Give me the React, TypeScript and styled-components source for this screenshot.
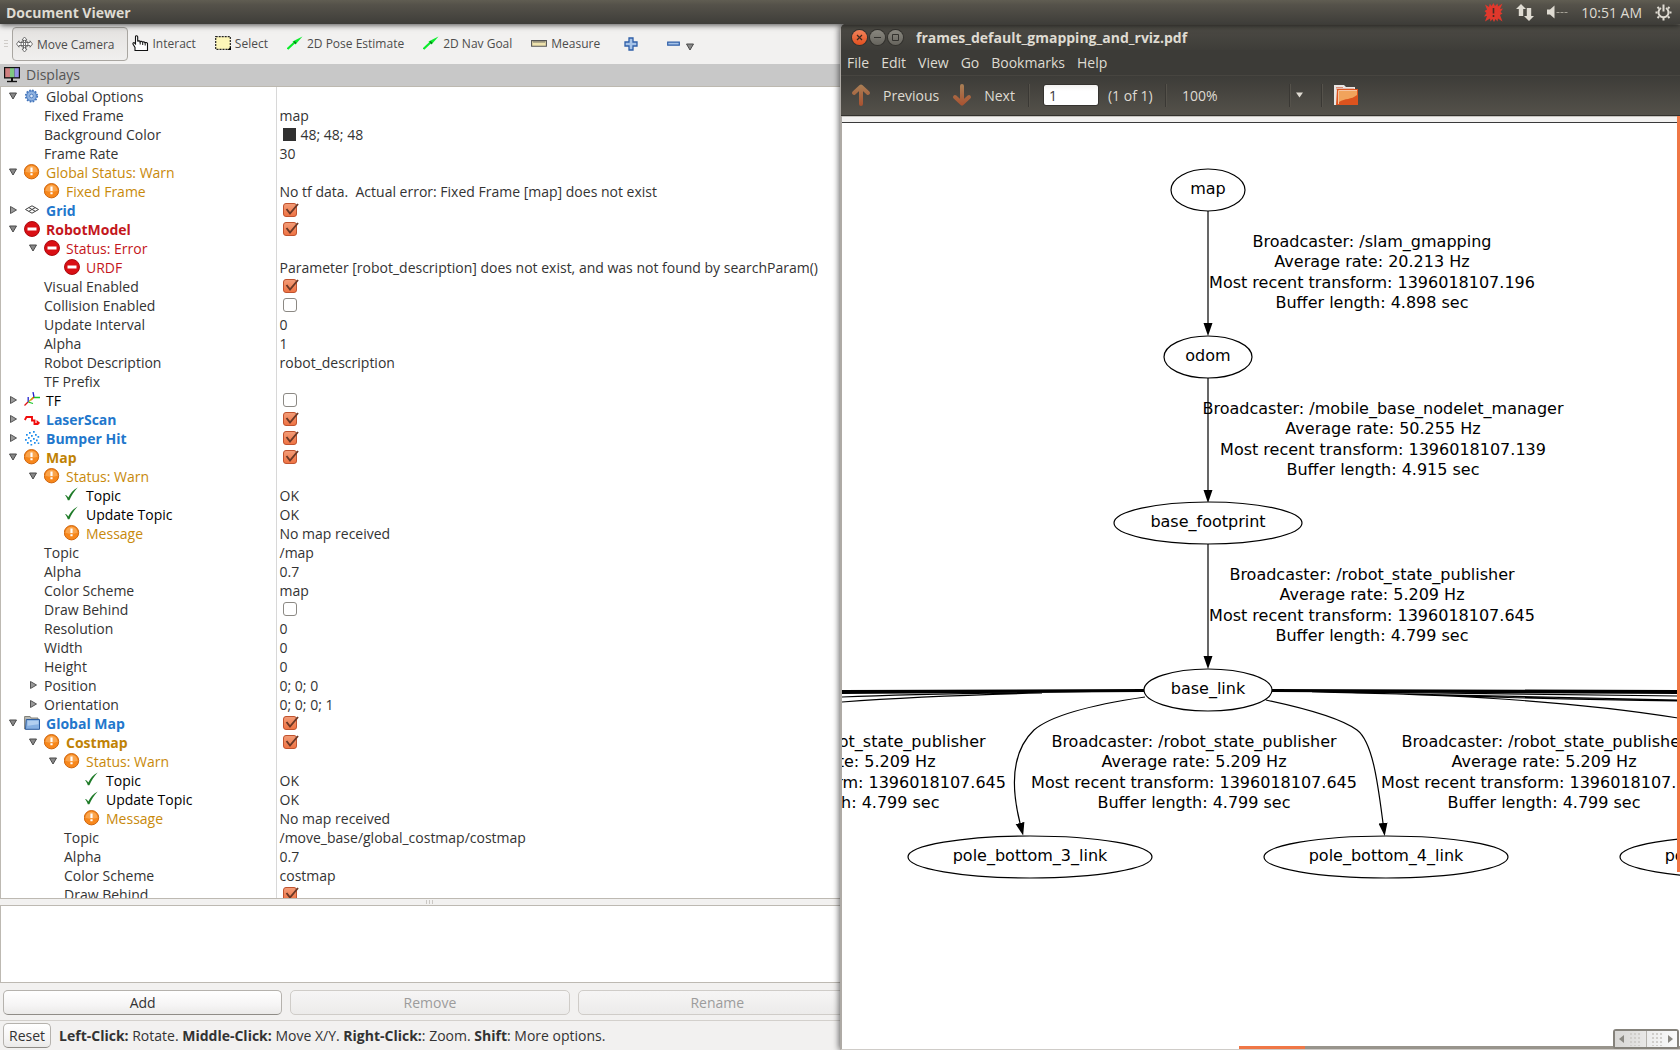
import React from "react";
import styled, { createGlobalStyle, css } from "styled-components";

const UI_FONT = '"Open Sans", "Noto Sans", sans-serif';

const GlobalStyle = createGlobalStyle`
  *, *::before, *::after { box-sizing: border-box; }
  html, body { margin: 0; height: 100%; overflow: hidden; }
  body { font-family: ${UI_FONT}; font-size: 14px; color: #333; background: #f2f1f0; }
  button, input { font: inherit; color: inherit; margin: 0; }
  svg { display: block; flex: none; }
`;

/* ---------- desktop ---------- */

const Desktop = styled.div`
  display: flex;
  flex-direction: column;
  height: 100vh;
`;

const Panel = styled.header`
  position: relative;
  z-index: 3;
  display: flex;
  align-items: center;
  flex: none;
  height: 24px;
  padding: 0 8px 0 6px;
  background: linear-gradient(#605d52, #55524a 20%, #3e3d39);
  box-shadow: 0 1px 6px rgba(0, 0, 0, 0.7);
  color: #dfdbd2;
`;

const PanelTitle = styled.h1`
  flex: 1;
  margin: 0;
  font-size: 14px;
  font-weight: 700;
`;

const Indicators = styled.div`
  display: flex;
  align-items: center;
  gap: 13px;
`;

const Workspace = styled.main`
  display: grid;
  grid-template-columns: minmax(0, 1fr) minmax(0, 1fr);
  flex: 1;
  min-height: 0;
`;

/* ---------- rviz window ---------- */

const Rviz = styled.section`
  display: flex;
  flex-direction: column;
  min-width: 0;
  min-height: 0;
  overflow: hidden;
  background: #f2f1f0;
`;

const ToolBar = styled.div`
  display: flex;
  align-items: center;
  flex: none;
  height: 40px;
  padding: 3px 4px;
`;

const Grip = styled.span`
  width: 4px;
  height: 8px;
  margin-right: 4px;
  background: repeating-linear-gradient(#cfccc8 0 1px, transparent 1px 3px);
`;

const ToolButton = styled.button<{ $active?: boolean }>`
  display: flex;
  align-items: center;
  gap: 4px;
  height: 34px;
  padding: 0 14px 2px 3px;
  border: 1px solid transparent;
  border-radius: 4px;
  background: none;
  font-size: 12px;
  white-space: nowrap;
  color: #4c4c4c;
  ${(p) =>
    p.$active &&
    css`
      padding: 0 12px 0 3px;
      border-color: #a9a6a1;
      background: linear-gradient(#e4e2e0, #f0efee);
    `}
`;

const ToolActions = styled.div`
  display: flex;
  align-items: center;
  gap: 20px;
`;

const RemoveButton = styled.button`
  display: flex;
  align-items: center;
  gap: 6px;
  padding: 0;
  border: 0;
  background: none;
`;

const MenuHint = styled.span`
  padding-top: 6px;
`;

const PanelHeading = styled.h2`
  display: flex;
  align-items: center;
  gap: 6px;
  flex: none;
  height: 23px;
  margin: 0;
  padding: 0 4px 1px;
  border-bottom: 1px solid #bdb9b0;
  background: #c8c8c8;
  font-size: 14px;
  font-weight: 400;
  color: #555;
`;

const TreeView = styled.div`
  flex: 1;
  min-height: 0;
  overflow: hidden;
  border-left: 1px solid #bdb9b2;
  border-bottom: 1px solid #bdb9b2;
  background: #fff;
`;

const Table = styled.table`
  width: 100%;
  border-collapse: collapse;
  table-layout: fixed;
`;

const NameCell = styled.th<{ $level: number; $color?: string; $bold?: boolean }>`
  width: 275px;
  height: 19px;
  padding: 0 0 0 ${(p) => 3 + p.$level * 20}px;
  border-right: 1px solid #d8d8d8;
  line-height: 19px;
  text-align: left;
  white-space: nowrap;
  font-weight: ${(p) => (p.$bold ? 700 : 400)};
  color: ${(p) => p.$color ?? "#333"};
`;

const NameInner = styled.div`
  display: flex;
  align-items: center;
  height: 19px;
`;

const Expander = styled.span`
  width: 20px;
  height: 19px;
  padding: 5px 0 0 5px;
`;

const RowIcon = styled.span`
  width: 16px;
  height: 19px;
  margin-right: 6px;
  padding-top: 1px;
`;

const ValueCell = styled.td`
  height: 19px;
  padding: 0 0 0 3px;
  line-height: 19px;
  white-space: pre;
`;

const ColorValue = styled.span`
  display: flex;
  align-items: center;
  gap: 5px;
  height: 19px;
  padding-left: 3px;
`;

const Swatch = styled.i`
  width: 13px;
  height: 13px;
  background: #303030;
`;

const CheckBox = styled.label`
  display: grid;
  width: 18px;
  height: 19px;
  margin-left: 3px;
  padding-bottom: 1px;
  align-items: center;

  > * {
    grid-area: 1 / 1;
  }
`;

const CheckInput = styled.input`
  appearance: none;
  width: 14px;
  height: 14px;
  border: 1px solid #8c8984;
  border-radius: 3px;
  background: #fff;

  &:checked {
    border-color: #c0532f;
    background: linear-gradient(#f39c77, #ef7444);
  }
`;

const Splitter = styled.div`
  display: grid;
  place-items: center;
  flex: none;
  height: 6px;
`;

const SplitterGrip = styled.span`
  width: 8px;
  height: 4px;
  margin-left: 20px;
  background: repeating-linear-gradient(90deg, #cbc8c4 0 1px, transparent 1px 3px);
`;

const HelpBox = styled.div`
  flex: none;
  height: 78px;
  border: 1px solid #bdb9b2;
  border-right: 0;
  background: #fff;
`;

/* The button row runs on beneath the neighbouring window. */
const ButtonRow = styled.div`
  display: flex;
  gap: 8px;
  flex: none;
  width: calc(100% + 20px);
  padding: 7px 3px 5px;
`;

const PushButton = styled.button<{ $grow?: boolean }>`
  flex: ${(p) => (p.$grow ? "1 1 0" : "none")};
  height: 25px;
  padding: 0 5px;
  border: 1px solid #b5b2ad;
  border-bottom-color: #8f8c87;
  border-radius: 5px;
  background: linear-gradient(#fff, #f6f5f5 60%, #ebeae9);
  line-height: 20px;

  &:disabled {
    border-color: #cfccc8;
    background: linear-gradient(#f6f5f5, #ecebea);
    color: #9c9c9c;
  }
`;

const StatusBar = styled.footer`
  display: flex;
  align-items: center;
  gap: 8px;
  flex: none;
  height: 30px;
  padding: 0 3px;
  border-top: 1px solid #d3d0cc;
  white-space: nowrap;
`;

/* ---------- document viewer window ---------- */

const Viewer = styled.section`
  position: relative;
  z-index: 2;
  display: flex;
  flex-direction: column;
  min-width: 0;
  min-height: 0;
  border-left: 2px solid #aeaaa5;
  border-bottom: 1px solid #cfccc8;
  border-top-left-radius: 6px;
  background: #fff;
  box-shadow: -1px 0 6px rgba(0, 0, 0, 0.6);
`;

const Chrome = styled.div`
  flex: none;
  margin-left: -1px;
  border-top-left-radius: 5px;
  overflow: hidden;
  color: #dfdbd2;
  background: #3c3b37;
`;

const TitleBar = styled.div`
  display: flex;
  align-items: center;
  height: 26px;
  padding: 0 11px;
  border-top: 1px solid #66645c;
  background: linear-gradient(#4d4b45, #3e3d39);
`;

const WindowControls = styled.div`
  display: flex;
  gap: 3px;
  margin-right: 13px;
`;

const WindowButton = styled.button<{ $close?: boolean }>`
  display: grid;
  place-items: center;
  width: 15px;
  height: 15px;
  padding: 0;
  border: 0;
  border-radius: 50%;
  background: ${(p) => (p.$close ? "linear-gradient(#f4845c, #e2501f)" : "linear-gradient(#8a8880, #66645d)")};
  box-shadow: 0 0 0 1px #33322e;
`;

const WindowTitle = styled.h2`
  margin: 0;
  font-size: 14px;
  font-weight: 700;
`;

const MenuBar = styled.nav`
  display: flex;
  height: 25px;
`;

const MenuItem = styled.button`
  padding: 0 6px;
  border: 0;
  background: none;
  line-height: 24px;
`;

const ViewerTools = styled.div`
  display: flex;
  align-items: center;
  height: 41px;
  padding: 0 10px 1px;
  border-top: 1px solid #474540;
  border-bottom: 1px solid #33312d;
  background: linear-gradient(#3d3c38, #54514a);
`;

const NavButton = styled.button`
  display: flex;
  align-items: center;
  gap: 12px;
  margin-right: 13px;
  padding: 0;
  border: 0;
  background: none;
`;

const Divider = styled.span`
  flex: none;
  width: 2px;
  height: 23px;
  border-left: 1px solid #3a3834;
  border-right: 1px solid #55524b;
`;

const PageEntry = styled.input`
  width: 56px;
  height: 22px;
  margin: 0 9px 0 13px;
  padding: 0 5px;
  border: 1px solid #35332f;
  border-radius: 3px;
  background: linear-gradient(#f2f1f0, #fff 30%);
  color: #3c3c3c;
`;

const PageCount = styled.span`
  width: 57px;
  white-space: nowrap;
`;

const ZoomEntry = styled.input`
  width: 122px;
  padding: 0 0 0 15px;
  border: 0;
  background: none;
`;

const IconButton = styled.button<{ $width: number; $start?: boolean }>`
  display: flex;
  align-items: center;
  justify-content: ${(p) => (p.$start ? "flex-start" : "center")};
  width: ${(p) => p.$width}px;
  padding: 0 0 0 ${(p) => (p.$start ? 5 : 0)}px;
  border: 0;
  background: none;
`;

const PageTop = styled.div`
  flex: none;
  height: 7px;
  border-top: 1px solid #c6c3be;
  border-bottom: 1px solid #3a3a3a;
  background: #f2f1f0;
`;

const Canvas = styled.div`
  flex: 1;
  min-height: 0;
  overflow: hidden;
`;

const Graph = styled.svg`
  width: 100%;
  height: 100%;
  font-family: "DejaVu Sans", sans-serif;
  font-size: 16px;
`;

const VerticalThumb = styled.span`
  position: absolute;
  top: 92px;
  right: 0;
  width: 3px;
  height: 756px;
  background: #f07746;
`;

const HorizontalTrack = styled.span`
  position: absolute;
  right: 0;
  bottom: 0;
  width: 441px;
  height: 3px;
  background: linear-gradient(90deg, #f07746 66px, #98948c 66px);
`;

const OverlayScroller = styled.div`
  position: absolute;
  right: 1px;
  bottom: 0;
  display: flex;
  width: 66px;
  height: 20px;
  border: 2px solid #85827b;
  border-radius: 3px;
  background: #eeedec;
`;

const ScrollHalf = styled.button<{ $right?: boolean }>`
  display: flex;
  flex: 1;
  flex-direction: ${(p) => (p.$right ? "row-reverse" : "row")};
  align-items: center;
  gap: 5px;
  padding: 0 4px;
  border: 0;
  border-left: ${(p) => (p.$right ? "1px solid #b4b1ac" : "0")};
  background: ${(p) => (p.$right ? "linear-gradient(90deg, #ececec, #fafafa)" : "linear-gradient(90deg, #d8d7d5, #e8e7e6)")};
`;

const Dots = styled.i`
  flex: 1;
  height: 14px;
  background: radial-gradient(#d0cecb 1px, transparent 1px) 0 0 / 4px 4px;
`;

/* ---------- icons ---------- */

const PlusIcon = () => (
  <svg width="14" height="14" viewBox="0 0 14 14">
    <path d="M5 1h4v4h4v4H9v4H5V9H1V5h4z" fill="#a6c3e8" stroke="#2f5fa8" strokeWidth="1.3" />
  </svg>
);

const MinusIcon = () => (
  <svg width="13" height="14" viewBox="0 0 13 14">
    <path d="M.7 5.2h11.6v3H.7z" fill="#a6c3e8" stroke="#2f5fa8" strokeWidth="1.2" />
  </svg>
);

const MoveIcon = () => (
  <svg width="17" height="17" viewBox="0 0 17 17" fill="#fff" stroke="#555" strokeWidth=".8">
    <path d="M8.500 1 11 4H9.500v2.500H14V4.800l2.500 3.200L14 11.200V9.500H9.500V13H11l-2.500 3L6 13h1.500V9.500H3v1.700L.5 8 3 4.800v1.700h4.500V4H6z" />
    <circle cx="8.500" cy="8" r="3.600" fill="none" />
    <path d="M7.500 6.500h2v3h-2z" />
  </svg>
);

const HandIcon = () => (
  <svg width="17" height="17" viewBox="0 0 17 17">
    <path
      d="M3.500 1.800c0-1.500 2.200-1.500 2.200 0v4.700c.3-.9 2.200-.8 2.400.2.500-.6 2.200-.5 2.500.5.500-.6 2-.4 2.400.5.600-.5 2.200-.3 2.500.8V15.500H3v-3L1.200 9.500C.4 8.200 1.700 7.200 2.600 8l.9.900z"
      fill="#fff"
      stroke="#111"
      strokeWidth="1.100"
    />
    <path d="M8.200 7v2.500M10.700 7.500v2.500M13.200 8v2.500" stroke="#111" />
  </svg>
);

const SelectIcon = () => (
  <svg width="16" height="14" viewBox="0 0 16 14">
    <path d="M.7.7h14.600v12.600H.7z" fill="#fdf6b8" stroke="#222" strokeWidth="1.200" strokeDasharray="2 1" />
    <path d="M12.500 14H16v-3.500z" fill="#000" />
  </svg>
);

const GreenArrowIcon = () => (
  <svg width="16" height="14" viewBox="0 0 16 14">
    <path d="M.5 13 8 6" stroke="#0bec2c" strokeWidth="2.200" />
    <path d="M15.500.5 5.500 5.500 8.500 8.500z" fill="#0bec2c" />
    <path d="m7 5.500 2 2" stroke="#077016" strokeWidth="1.300" />
  </svg>
);

const RulerIcon = () => (
  <svg width="16" height="8" viewBox="0 0 16 8">
    <path d="M.6 1.600h14.800v5.600H.6z" fill="#efe3ae" stroke="#555" strokeWidth="1.100" />
    <path d="M3 1.500v2.500M5 1.500v2.500M7 1.500v2.500M9 1.500v2.500M11 1.500v2.500M13 1.500v2.500" stroke="#555" strokeWidth=".8" />
  </svg>
);

const MonitorIcon = () => (
  <svg width="16" height="17" viewBox="0 0 16 17">
    <path d="M0 1h16v11.500H0z" fill="#111" />
    <path d="M1.200 2.200H6v9H1.200z" fill="#cf7f7f" />
    <path d="M6 2.200h4.500v9H6z" fill="#7fc882" />
    <path d="M10.500 2.200h4.300v9h-4.300z" fill="#9492e4" />
    <path d="M8 12v3" stroke="#111" strokeWidth="2" />
    <path d="M3 15.500h10" stroke="#111" strokeWidth="1.400" />
  </svg>
);

type IconName = "gear" | "warn" | "error" | "grid" | "tf" | "laser" | "points" | "ok" | "folder";

const drawings: Record<IconName, React.ReactNode> = {
  gear: (
    <>
      <circle cx="7.500" cy="8" r="5.700" fill="#8fb2e0" stroke="#4172b8" strokeWidth="1.800" strokeDasharray="1.600 1.380" />
      <circle cx="7.500" cy="8" r="4.800" fill="#8fb2e0" stroke="#4f80c4" strokeWidth=".8" />
      <circle cx="7.500" cy="8" r="1.800" fill="#dce8f8" stroke="#4172b8" strokeWidth=".8" />
    </>
  ),
  warn: (
    <>
      <circle cx="7.500" cy="7.700" r="7.200" fill="#f7871c" stroke="#c95f06" strokeWidth=".9" />
      <path d="M1.500 7.700a6 6 0 0 1 12 0q-6 2-12 0z" fill="#fbb264" opacity=".7" />
      <path d="M7.500 3.500v4.500M7.500 9.200v2" stroke="#fff" strokeWidth="2.200" />
    </>
  ),
  error: (
    <>
      <circle cx="8" cy="8" r="7.500" fill="#d90f14" stroke="#a40006" strokeWidth=".9" />
      <path d="M3.500 6.500h9v3h-9z" fill="#fff" />
    </>
  ),
  grid: (
    <g fill="none" stroke="#444" strokeWidth="1">
      <path d="M1.500 7.500 8 3.800 14.500 7.500 8 11.200zM4.800 5.600l6.500 3.700M11.300 5.600 4.800 9.300" />
    </g>
  ),
  tf: (
    <g fill="none" strokeWidth="1.300">
      <path d="M.5 13.500 4 10M7 8l3-3" stroke="#e01010" />
      <path d="M4.200 10V5M10 5 9 0" stroke="#2222d0" />
      <path d="M4.200 10 9 11.500M10 5.500h6" stroke="#18c828" />
      <path d="m5 9.500 4-4" stroke="#d0b010" />
    </g>
  ),
  laser: <path d="M.8 9 2.500 6h5.500v3.500h2.500v3.500h3v-2l2 1.500" fill="none" stroke="#f00c0c" strokeWidth="1.900" />,
  points: (
    <path
      d="M5 2h1.700v1.700H5zM9 1h1.700v1.700H9zM2 4h1.700v1.700H2zM7 5h1.700v1.700H7zM11 4h1.700v1.700H11zM13.500 6h1.700v1.700h-1.700zM4 7h1.700v1.700H4zM1 9h1.700v1.700H1zM9 8h1.700v1.700H9zM6 10h1.700v1.700H6zM12 9.500h1.700v1.700H12zM3 12h1.700v1.700H3zM10 12h1.700v1.700H10zM6.500 14h1.700v1.500H6.500zM13.800 12.500h1.500v1.500h-1.500z"
      fill="#1e8ceb"
    />
  ),
  ok: <path d="M1 8.500c1.300-1 2.300.3 3.300 2C6.500 6 9 3 13.700.5 10 4.500 7.500 8 5.400 13.300H3.800C3.200 11 2.300 9.500 1 8.500z" fill="#1d7a27" />,
  folder: (
    <>
      <path d="M.6 14V1.500h5.500l1 1.500H14v10z" fill="#b9b9b4" stroke="#77776f" strokeWidth=".9" />
      <path d="M2.300 4.500h13.200v9.800H1.500z" fill="#86b0e2" stroke="#2c5c9e" />
      <path d="M3.500 5.800h11v3.500l-11 1.500z" fill="#b2cff0" />
    </>
  ),
};

const TreeIcon = ({ name }: { name: IconName }) => (
  <RowIcon>
    <svg width="16" height="16" viewBox="0 0 16 16" aria-hidden="true">
      {drawings[name]}
    </svg>
  </RowIcon>
);

const OpenArrow = () => (
  <svg width="8" height="8" viewBox="0 0 8 8">
    <path d="M.5 1h7L4 7z" fill="#888" stroke="#4a4a4a" />
  </svg>
);

const ClosedArrow = () => (
  <svg width="8" height="8" viewBox="0 0 8 8">
    <path d="M1.500.5v7l6-3.500z" fill="#999" stroke="#555" />
  </svg>
);

const CheckMark = () => (
  <svg width="17" height="15" viewBox="0 0 17 15" pointerEvents="none">
    <path d="M3.500 6 7 10.500 15 1" fill="none" stroke="#6b3826" strokeWidth="1.900" />
  </svg>
);

const NavArrow = ({ down }: { down?: boolean }) => (
  <svg width="20" height="24" viewBox="0 0 20 24">
    <defs>
      <linearGradient id="navArrow" x1="0" y1="0" x2="0" y2="24" gradientUnits="userSpaceOnUse">
        <stop offset="0" stopColor="#a98258" />
        <stop offset="1" stopColor="#a94f2e" />
      </linearGradient>
    </defs>
    <path
      d={down ? "M10 3v17M3 14l7 6.500 7-6.500" : "M10 21V4M3 10l7-6.500 7 6.500"}
      fill="none"
      stroke="url(#navArrow)"
      strokeWidth="4"
      strokeLinecap="round"
      strokeLinejoin="round"
    />
  </svg>
);

const FolderStack = () => (
  <svg width="24" height="22" viewBox="0 0 24 22">
    <path d="M0 1h10l2 2h9v5H4v13H0z" fill="#e9e6e4" />
    <path d="M2 3.500h7M2 5h18" stroke="#d98e78" />
    <path d="M3 5H24V21H2z" fill="#dd531e" />
    <path d="M5 7h18v4c-6 5-12 3-18 7z" fill="#f1a35c" />
    <path d="M4.500 20V6.500H23" fill="none" stroke="#f6c3a0" />
  </svg>
);

const BugIcon = () => (
  <svg width="19" height="19" viewBox="0 0 19 19">
    <path
      d="M1 1.500 5 4l.8-3.500L7.500 3l2-3 1.500 3 2.500-2.500.5 3L18.500.500 16 6l3-.5-2.500 3.500 2 1.500-2.500 1.500 2.500 6.500L14 15.500l-.5 3-2-2.500-1.500 3L8.500 16l-2 2.500L6 15.500 1 18.500 3 13l-3 .5 2.500-3.500L.500 8 3 6.500z"
      fill="#e0382c"
    />
    <path d="M9.500 5v5.500M9.500 12v2" stroke="#4a2a24" strokeWidth="1.600" />
  </svg>
);

const NetworkIcon = () => (
  <svg width="18" height="17" viewBox="0 0 18 17" fill="#dfdbd2">
    <path d="M5 0 10 5H7.200v7H2.800V5H0zM13 17l-5-5h2.800V4h4.400v8H18z" />
  </svg>
);

const VolumeIcon = () => (
  <svg width="21" height="14" viewBox="0 0 21 14">
    <path d="M0 4.500h3L7.500.5v13L3 9.500H0z" fill="#dfdbd2" />
    <path d="M9.500 7.500h3M13.500 7.500h3M17.500 7.500h3" stroke="#a5a196" />
  </svg>
);

const SessionIcon = () => (
  <svg width="17" height="17" viewBox="0 0 17 17" fill="none" stroke="#dfdbd2">
    <path d="M6 4a5 5 0 1 0 5 0" strokeWidth="2" />
    <path d="M8.500.5v7" strokeWidth="2" />
    <path d="M2.500 3l1.500 1.500M.5 8.500h2M2.500 14 4 12.500M8.500 14v2.500M14.500 14 13 12.500M16.500 8.500h-2M14.500 3 13 4.500" strokeWidth="2" />
  </svg>
);

/* ---------- display tree ---------- */

const WARN = "#c8890b";
const WARN_BOLD = "#bf8205";
const ERROR = "#c4161c";
const BLUE = "#2277cc";

type Row = {
  level: number;
  name: string;
  value?: string | boolean;
  icon?: IconName;
  open?: boolean;
  color?: string;
  bold?: boolean;
  swatch?: boolean;
};

const rows: Row[] = [
  { level: 0, name: "Global Options", icon: "gear", open: true },
  { level: 1, name: "Fixed Frame", value: "map" },
  { level: 1, name: "Background Color", value: "48; 48; 48", swatch: true },
  { level: 1, name: "Frame Rate", value: "30" },
  { level: 0, name: "Global Status: Warn", icon: "warn", open: true, color: WARN },
  { level: 1, name: "Fixed Frame", icon: "warn", color: WARN, value: "No tf data.  Actual error: Fixed Frame [map] does not exist" },
  { level: 0, name: "Grid", icon: "grid", open: false, color: BLUE, bold: true, value: true },
  { level: 0, name: "RobotModel", icon: "error", open: true, color: ERROR, bold: true, value: true },
  { level: 1, name: "Status: Error", icon: "error", open: true, color: ERROR },
  { level: 2, name: "URDF", icon: "error", color: ERROR, value: "Parameter [robot_description] does not exist, and was not found by searchParam()" },
  { level: 1, name: "Visual Enabled", value: true },
  { level: 1, name: "Collision Enabled", value: false },
  { level: 1, name: "Update Interval", value: "0" },
  { level: 1, name: "Alpha", value: "1" },
  { level: 1, name: "Robot Description", value: "robot_description" },
  { level: 1, name: "TF Prefix" },
  { level: 0, name: "TF", icon: "tf", open: false, color: "#000", value: false },
  { level: 0, name: "LaserScan", icon: "laser", open: false, color: BLUE, bold: true, value: true },
  { level: 0, name: "Bumper Hit", icon: "points", open: false, color: BLUE, bold: true, value: true },
  { level: 0, name: "Map", icon: "warn", open: true, color: WARN_BOLD, bold: true, value: true },
  { level: 1, name: "Status: Warn", icon: "warn", open: true, color: WARN },
  { level: 2, name: "Topic", icon: "ok", color: "#000", value: "OK" },
  { level: 2, name: "Update Topic", icon: "ok", color: "#000", value: "OK" },
  { level: 2, name: "Message", icon: "warn", color: WARN, value: "No map received" },
  { level: 1, name: "Topic", value: "/map" },
  { level: 1, name: "Alpha", value: "0.7" },
  { level: 1, name: "Color Scheme", value: "map" },
  { level: 1, name: "Draw Behind", value: false },
  { level: 1, name: "Resolution", value: "0" },
  { level: 1, name: "Width", value: "0" },
  { level: 1, name: "Height", value: "0" },
  { level: 1, name: "Position", open: false, value: "0; 0; 0" },
  { level: 1, name: "Orientation", open: false, value: "0; 0; 0; 1" },
  { level: 0, name: "Global Map", icon: "folder", open: true, color: BLUE, bold: true, value: true },
  { level: 1, name: "Costmap", icon: "warn", open: true, color: WARN_BOLD, bold: true, value: true },
  { level: 2, name: "Status: Warn", icon: "warn", open: true, color: WARN },
  { level: 3, name: "Topic", icon: "ok", color: "#000", value: "OK" },
  { level: 3, name: "Update Topic", icon: "ok", color: "#000", value: "OK" },
  { level: 3, name: "Message", icon: "warn", color: WARN, value: "No map received" },
  { level: 2, name: "Topic", value: "/move_base/global_costmap/costmap" },
  { level: 2, name: "Alpha", value: "0.7" },
  { level: 2, name: "Color Scheme", value: "costmap" },
  { level: 2, name: "Draw Behind", value: true },
];

const Value = ({ row }: { row: Row }) => {
  if (typeof row.value === "boolean") {
    return (
      <CheckBox>
        <CheckInput type="checkbox" defaultChecked={row.value} aria-label={row.name} />
        {row.value && <CheckMark />}
      </CheckBox>
    );
  }
  if (row.swatch) {
    return (
      <ColorValue>
        <Swatch />
        {row.value}
      </ColorValue>
    );
  }
  return <>{row.value}</>;
};

const DisplayTree = () => (
  <TreeView>
    <Table>
      <tbody>
        {rows.map((row, i) => (
          <tr key={i}>
            <NameCell scope="row" $level={row.level} $color={row.color} $bold={row.bold}>
              <NameInner>
                <Expander>{row.open === true ? <OpenArrow /> : row.open === false ? <ClosedArrow /> : null}</Expander>
                {row.icon && <TreeIcon name={row.icon} />}
                {row.name}
              </NameInner>
            </NameCell>
            <ValueCell>
              <Value row={row} />
            </ValueCell>
          </tr>
        ))}
      </tbody>
    </Table>
  </TreeView>
);

/* ---------- transform graph ---------- */

const nodes = [
  { name: "map", x: 366, y: 67, rx: 37 },
  { name: "odom", x: 366, y: 234, rx: 44 },
  { name: "base_footprint", x: 366, y: 400, rx: 94 },
  { name: "base_link", x: 366, y: 567, rx: 64 },
  { name: "pole_bottom_3_link", x: 188, y: 734, rx: 122 },
  { name: "pole_bottom_4_link", x: 544, y: 734, rx: 122 },
  { name: "pole_bottom_5_link", x: 900, y: 734, rx: 122 },
];

const labels = [
  { x: 530, y: 124, by: "/slam_gmapping", rate: "20.213", stamp: "1396018107.196", buffer: "4.898" },
  { x: 541, y: 291, by: "/mobile_base_nodelet_manager", rate: "50.255", stamp: "1396018107.139", buffer: "4.915" },
  { x: 530, y: 457, by: "/robot_state_publisher", rate: "5.209", stamp: "1396018107.645", buffer: "4.799" },
  { x: 1, y: 624, by: "/robot_state_publisher", rate: "5.209", stamp: "1396018107.645", buffer: "4.799" },
  { x: 352, y: 624, by: "/robot_state_publisher", rate: "5.209", stamp: "1396018107.645", buffer: "4.799" },
  { x: 702, y: 624, by: "/robot_state_publisher", rate: "5.209", stamp: "1396018107.645", buffer: "4.799" },
];

const LINE_OFFSETS = [0, 20, 41, 61];

const TransformGraph = () => (
  <Graph role="img" aria-label="Transform frames">
    <defs>
      <marker id="head" markerWidth="14" markerHeight="10" refX="0" refY="5" orient="auto" markerUnits="userSpaceOnUse">
        <path d="M0 .5 13 5 0 9.500z" />
      </marker>
    </defs>
    <g fill="none" stroke="#000" strokeWidth="1.200">
      <path d="M366 88V200" markerEnd="url(#head)" />
      <path d="M366 255V367" markerEnd="url(#head)" />
      <path d="M366 421V533" markerEnd="url(#head)" />
      <path d="M303 574C262 580 212 590 192 607C169 629 169 664 178 700" markerEnd="url(#head)" />
      <path d="M424 577C462 585 500 596 515 607C531 619 536 662 541 700" markerEnd="url(#head)" />
      <path d="M0 574Q90 570 302 568M0 579Q80 573 200 570" />
      <path d="M430 568 836 573M470 569 836 577M500 569Q680 576 836 578M510 570C620 572 730 578 836 595" />
    </g>
    <path d="M0 567 302 566v3L0 571zM430 566 836 567v4L430 569z" />
    {nodes.map((n) => (
      <g key={n.name}>
        <ellipse cx={n.x} cy={n.y} rx={n.rx} ry="21" fill="#fff" stroke="#000" strokeWidth="1.200" />
        <text x={n.x} y={n.y + 4} textAnchor="middle">
          {n.name}
        </text>
      </g>
    ))}
    {labels.map((l, i) => (
      <g key={i} textAnchor="middle">
        {[`Broadcaster: ${l.by}`, `Average rate: ${l.rate} Hz`, `Most recent transform: ${l.stamp}`, `Buffer length: ${l.buffer} sec`].map(
          (line, k) => (
            <text key={k} x={l.x} y={l.y + LINE_OFFSETS[k]}>
              {line}
            </text>
          )
        )}
      </g>
    ))}
  </Graph>
);

/* ---------- page ---------- */

const App = () => (
  <>
    <GlobalStyle />
    <Desktop>
      <Panel>
        <PanelTitle>Document Viewer</PanelTitle>
        <Indicators>
          <BugIcon />
          <NetworkIcon />
          <VolumeIcon />
          <time>10:51 AM</time>
          <SessionIcon />
        </Indicators>
      </Panel>
      <Workspace>
        <Rviz>
          <ToolBar>
            <Grip />
            <ToolButton $active>
              <MoveIcon />
              Move Camera
            </ToolButton>
            <ToolButton>
              <HandIcon />
              Interact
            </ToolButton>
            <ToolButton>
              <SelectIcon />
              Select
            </ToolButton>
            <ToolButton>
              <GreenArrowIcon />
              2D Pose Estimate
            </ToolButton>
            <ToolButton>
              <GreenArrowIcon />
              2D Nav Goal
            </ToolButton>
            <ToolButton>
              <RulerIcon />
              Measure
            </ToolButton>
            <ToolActions>
              <IconButton $width={32} aria-label="Add tool">
                <PlusIcon />
              </IconButton>
              <RemoveButton aria-label="Remove tool">
                <MinusIcon />
                <MenuHint>
                  <OpenArrow />
                </MenuHint>
              </RemoveButton>
            </ToolActions>
          </ToolBar>
          <PanelHeading>
            <MonitorIcon />
            Displays
          </PanelHeading>
          <DisplayTree />
          <Splitter>
            <SplitterGrip />
          </Splitter>
          <HelpBox />
          <ButtonRow>
            <PushButton $grow>Add</PushButton>
            <PushButton $grow disabled>
              Remove
            </PushButton>
            <PushButton $grow disabled>
              Rename
            </PushButton>
          </ButtonRow>
          <StatusBar>
            <PushButton>Reset</PushButton>
            <span>
              <b>Left-Click:</b> Rotate. <b>Middle-Click:</b> Move X/Y. <b>Right-Click:</b>: Zoom. <b>Shift</b>: More options.
            </span>
          </StatusBar>
        </Rviz>
        <Viewer>
          <Chrome>
            <TitleBar>
              <WindowControls>
                <WindowButton $close aria-label="Close">
                  <svg width="7" height="7" viewBox="0 0 7 7">
                    <path d="m1 1 5 5M6 1 1 6" stroke="#3c2a20" strokeWidth="1.200" />
                  </svg>
                </WindowButton>
                <WindowButton aria-label="Minimize">
                  <svg width="7" height="7" viewBox="0 0 7 7">
                    <path d="M0 3.500h7" stroke="#33322e" />
                  </svg>
                </WindowButton>
                <WindowButton aria-label="Maximize">
                  <svg width="7" height="7" viewBox="0 0 7 7">
                    <path d="M.5.5h6v6h-6z" fill="none" stroke="#33322e" />
                  </svg>
                </WindowButton>
              </WindowControls>
              <WindowTitle>frames_default_gmapping_and_rviz.pdf</WindowTitle>
            </TitleBar>
            <MenuBar>
              {["File", "Edit", "View", "Go", "Bookmarks", "Help"].map((m) => (
                <MenuItem key={m}>{m}</MenuItem>
              ))}
            </MenuBar>
            <ViewerTools>
              <NavButton>
                <NavArrow />
                Previous
              </NavButton>
              <NavButton>
                <NavArrow down />
                Next
              </NavButton>
              <Divider />
              <PageEntry defaultValue="1" aria-label="Page" />
              <PageCount>(1 of 1)</PageCount>
              <Divider />
              <ZoomEntry defaultValue="100%" aria-label="Zoom" />
              <Divider />
              <IconButton $width={30} $start aria-label="Zoom levels">
                <svg width="7" height="6" viewBox="0 0 7 6">
                  <path d="M0 .5h7L3.500 5.500z" fill="#dfdbd2" />
                </svg>
              </IconButton>
              <Divider />
              <IconButton $width={46} aria-label="Open folder">
                <FolderStack />
              </IconButton>
            </ViewerTools>
          </Chrome>
          <PageTop />
          <Canvas>
            <TransformGraph />
          </Canvas>
          <VerticalThumb />
          <HorizontalTrack />
          <OverlayScroller>
            <ScrollHalf aria-label="Scroll left">
              <svg width="5" height="8" viewBox="0 0 5 8">
                <path d="M5 0v8L0 4z" fill="#8a8882" />
              </svg>
              <Dots />
            </ScrollHalf>
            <ScrollHalf $right aria-label="Scroll right">
              <svg width="5" height="8" viewBox="0 0 5 8">
                <path d="M0 0v8l5-4z" fill="#8a8882" />
              </svg>
              <Dots />
            </ScrollHalf>
          </OverlayScroller>
        </Viewer>
      </Workspace>
    </Desktop>
  </>
);

export default App;
